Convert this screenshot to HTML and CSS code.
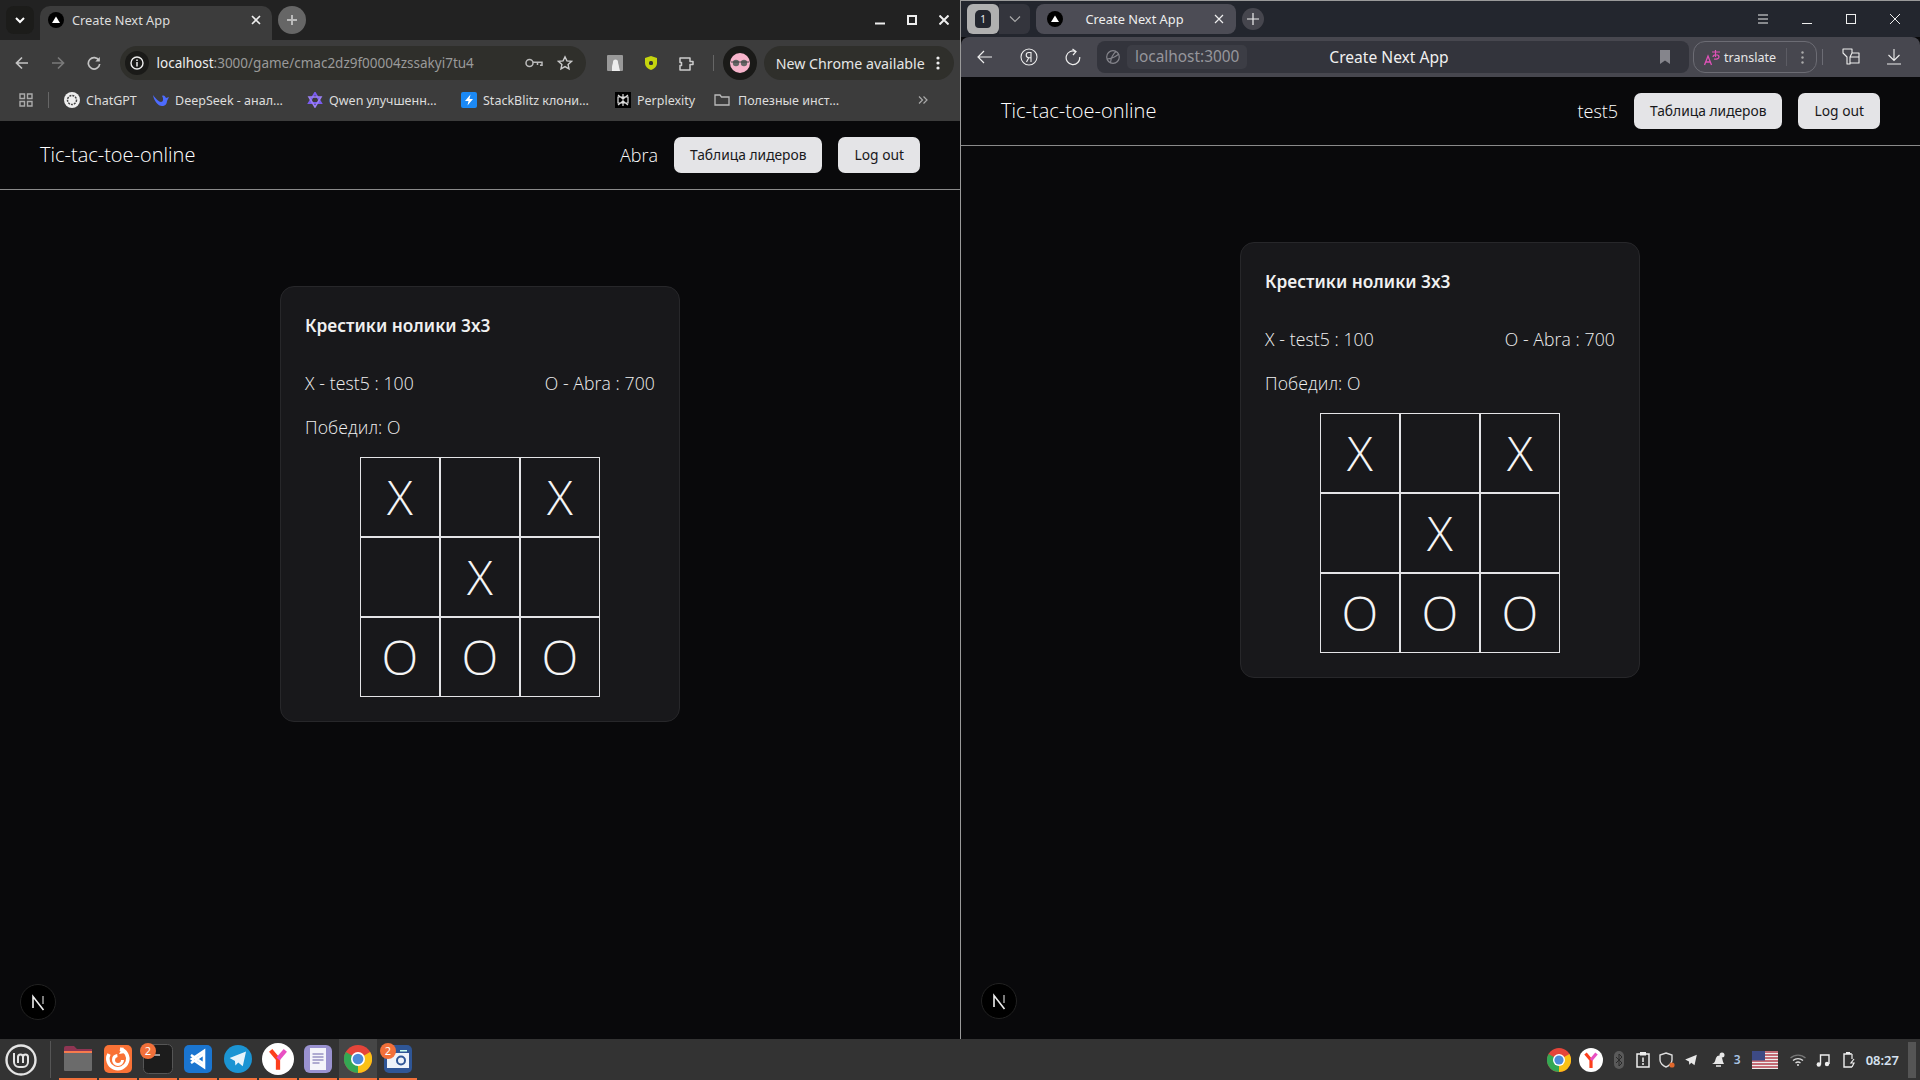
FILE: index.html
```html
<!DOCTYPE html>
<html lang="en">
<head>
    <meta charset="UTF-8">
    <title>Desktop</title>
    <link rel="stylesheet" href="styles.css">
</head>
<body>
<svg class="sprites" width="0" height="0">
    <symbol id="tri" viewBox="0 0 16 16"><circle cx="8" cy="8" r="8" fill="#000"/><path d="M8 4.5l4 6.5H4z" fill="#fff"/></symbol>
    <symbol id="nbadge" viewBox="0 0 36 36"><circle cx="18" cy="18" r="17.5" fill="#000" stroke="#222"/><path d="M13 24V12.5L23.5 26" fill="none" stroke="#eee" stroke-width="1.6"/><path d="M23 12v8" stroke="#999" stroke-width="1.6"/></symbol>
    <symbol id="chrome" viewBox="0 0 24 24"><circle cx="12" cy="12" r="12" fill="#e5453a"/><path d="M12 12L1.6 6A12 12 0 0 0 12 24z" fill="#34a853"/><path d="M12 12v12A12 12 0 0 0 22.4 6z" fill="#fbc116"/><circle cx="12" cy="12" r="6" fill="#fff"/><circle cx="12" cy="12" r="4.6" fill="#4c8bd8"/></symbol>
    <symbol id="yandex" viewBox="0 0 24 24"><circle cx="12" cy="12" r="12" fill="#fff"/><path d="M12 20v-8L6.5 5.5" fill="none" stroke="#fc3f1d" stroke-width="3.2"/><path d="M12 12l5.5-6.5" fill="none" stroke="#e84fc2" stroke-width="3.2"/></symbol>
    <symbol id="tele" viewBox="0 0 24 24"><path d="M2 11L22 3l-4 18-5.5-4.5L9 20l-.5-5.5z" fill="currentColor"/></symbol>
</svg>

<div class="desktop">
    <!-- left window, chrome -->
    <section class="win win-chrome">
        <div class="c-tabs">
            <div class="c-tablist"><svg width="12" height="8" viewBox="0 0 12 8"><path d="M2 2l4 4 4-4" fill="none" stroke="#fff" stroke-width="2"/></svg></div>
            <div class="c-tab">
                <svg class="fav" width="16" height="16"><use href="#tri"/></svg>
                <span class="c-tab-title">Create Next App</span>
                <svg width="10" height="10" viewBox="0 0 10 10"><path d="M1 1l8 8M9 1l-8 8" stroke="#eee" stroke-width="1.6"/></svg>
            </div>
            <div class="c-newtab"><svg width="12" height="12" viewBox="0 0 12 12"><path d="M6 1v10M1 6h10" stroke="#bbb" stroke-width="2"/></svg></div>
            <div class="c-winbtns">
                <svg width="10" height="10" viewBox="0 0 10 10"><path d="M0 8.500h10" stroke="#eee" stroke-width="2"/></svg>
                <svg width="10" height="10" viewBox="0 0 10 10"><rect x="1" y="1" width="8" height="8" fill="none" stroke="#eee" stroke-width="2"/></svg>
                <svg width="10" height="10" viewBox="0 0 10 10"><path d="M.5.5l9 9M9.5.5l-9 9" stroke="#eee" stroke-width="2"/></svg>
            </div>
        </div>
        <div class="c-toolbar">
            <div class="c-nav">
                <svg width="14" height="14" viewBox="0 0 14 14"><path d="M13 7H2M7 1.5L1.500 7 7 12.500" fill="none" stroke="#c4c4c4" stroke-width="1.7"/></svg>
                <svg width="14" height="14" viewBox="0 0 14 14"><path d="M1 7h11M7 1.500L12.500 7 7 12.500" fill="none" stroke="#7a7a7a" stroke-width="1.7"/></svg>
                <svg width="14" height="14" viewBox="0 0 14 14"><path d="M12 4.500A5.700 5.700 0 1 0 12.700 8" fill="none" stroke="#c4c4c4" stroke-width="1.7"/><path d="M12.800 1v4.500H8.300z" fill="#c4c4c4"/></svg>
            </div>
            <div class="c-omni">
                <div class="c-info"><svg width="14" height="14" viewBox="0 0 14 14"><circle cx="7" cy="7" r="6" fill="none" stroke="#eee" stroke-width="1.4"/><path d="M7 6v4.500M7 3.500V5" stroke="#eee" stroke-width="1.5"/></svg></div>
                <div class="c-url">localhost<span class="c-url-rest">:3000/game/cmac2dz9f00004zssakyi7tu4</span></div>
                <svg width="18" height="10" viewBox="0 0 18 10"><circle cx="4.500" cy="5" r="3.500" fill="none" stroke="#bbb" stroke-width="1.5"/><path d="M8 4.200h9v3h-2M12.500 4.500V7" fill="none" stroke="#bbb" stroke-width="1.5"/></svg>
                <svg class="c-star" width="16" height="16" viewBox="0 0 16 16"><path d="M8 1.800l1.900 4.100 4.500.5-3.300 3 .9 4.400L8 11.600l-4 2.200.9-4.400-3.300-3 4.500-.5z" fill="none" stroke="#ccc" stroke-width="1.4"/></svg>
            </div>
            <div class="c-exts">
                <svg width="16" height="16" viewBox="0 0 16 16"><rect width="16" height="16" rx="1" fill="#999"/><path d="M5 16V12c0-2 1-3 1-5a2.500 2.500 0 0 1 5 0c0 2 1 3 1 5l1 4z" fill="#eee"/></svg>
                <svg width="12" height="14" viewBox="0 0 12 14"><path d="M6 0l6 2v5c0 3.500-3 6-6 7-3-1-6-3.500-6-7V2z" fill="#c5d50e"/><rect x="4" y="5" width="4" height="4" rx="1.500" fill="#333"/></svg>
                <svg width="16" height="16" viewBox="0 0 16 16"><path d="M1 3h10v3.500h3v3h-3V15H1v-4.500h1.500v-3H1z" fill="none" stroke="#ccc" stroke-width="1.5" stroke-linejoin="round"/></svg>
            </div>
            <div class="c-divider"></div>
            <div class="c-avatar"><svg width="20" height="20" viewBox="0 0 20 20"><circle cx="10" cy="10" r="10" fill="#f7b4cb"/><circle cx="6" cy="10" r="3.200" fill="#666"/><circle cx="14" cy="10" r="3.200" fill="#666"/><path d="M1 9h18" stroke="#444"/></svg></div>
            <div class="c-update">
                <span>New Chrome available</span>
                <svg width="4" height="14" viewBox="0 0 4 14"><circle cx="2" cy="2" r="1.600" fill="#eee"/><circle cx="2" cy="7" r="1.600" fill="#eee"/><circle cx="2" cy="12" r="1.600" fill="#eee"/></svg>
            </div>
        </div>
        <div class="c-marks">
            <svg class="c-apps" width="14" height="14" viewBox="0 0 14 14"><path d="M1 1h4.500v4.500H1zM8.500 1H13v4.500H8.500zM1 8.500h4.500V13H1zM8.500 8.500H13V13H8.500z" fill="none" stroke="#aaa" stroke-width="1.4"/></svg>
            <div class="c-marks-sep"></div>
            <a class="mark m-gpt"><svg width="16" height="16" viewBox="0 0 16 16"><circle cx="8" cy="8" r="8" fill="#eee"/><circle cx="8" cy="8" r="4.500" fill="none" stroke="#444" stroke-width="1.500" stroke-dasharray="2 1"/></svg>ChatGPT</a>
            <a class="mark m-deep"><svg width="16" height="12" viewBox="0 0 16 12"><path d="M0 1c1 6 5 11 9 11 3 0 5-2 5-5l2-4-3 1c-1-2-2-3-4-2 2 3 1 6-1 6C6 8 3 5 0 1z" fill="#4d6bfe"/></svg>DeepSeek - анал…</a>
            <a class="mark m-qwen"><svg width="16" height="16" viewBox="0 0 16 16"><path d="M8 1l6 10H2z" fill="none" stroke="#7a5bf0" stroke-width="2"/><path d="M8 15L2 5h12z" fill="none" stroke="#9a80f5" stroke-width="1.6"/></svg>Qwen улучшенн…</a>
            <a class="mark m-stack"><svg width="16" height="16" viewBox="0 0 16 16"><rect width="16" height="16" rx="2" fill="#1b89f5"/><path d="M9.500 2.500L4 9h3.500l-1 4.500L12 7H8.500z" fill="#fff"/></svg>StackBlitz клони…</a>
            <a class="mark m-perp"><svg width="16" height="16" viewBox="0 0 16 16"><rect width="16" height="16" fill="#000"/><path d="M8 2v12M3 3l5 4 5-4M3 13l5-4 5 4M3 5v6h10V5z" fill="none" stroke="#ddd" stroke-width="1.2"/></svg>Perplexity</a>
            <a class="mark m-folder"><svg width="16" height="12" viewBox="0 0 16 12"><path d="M1 1h5l1.500 2H15v8H1z" fill="none" stroke="#bbb" stroke-width="1.3"/></svg>Полезные инст…</a>
            <svg class="c-more" width="10" height="8" viewBox="0 0 10 8"><path d="M1 .5L4.500 4 1 7.500M5.500.5L9 4 5.500 7.500" fill="none" stroke="#aaa" stroke-width="1.2"/></svg>
        </div>
        <main class="page">
            <header class="site-head">
                <span class="logo">Tic-tac-toe-online</span>
                <span class="user">Abra</span>
                <button class="btn">Таблица лидеров</button>
                <button class="btn">Log out</button>
            </header>
            <div class="card card-left">
                <h2 class="card-title">Крестики нолики 3х3</h2>
                <div class="players"><span>X - test5 : 100</span><span>O - Abra : 700</span></div>
                <div class="winner">Победил: O</div>
                <div class="board">
                    <div class="cell">X</div><div class="cell"></div><div class="cell">X</div>
                    <div class="cell"></div><div class="cell">X</div><div class="cell"></div>
                    <div class="cell">O</div><div class="cell">O</div><div class="cell">O</div>
                </div>
            </div>
            <svg class="next-badge" width="36" height="36"><use href="#nbadge"/></svg>
        </main>
    </section>

    <!-- right window, yandex -->
    <section class="win win-yandex">
        <div class="y-tabs">
            <div class="y-count"><span class="y-count-num">1</span></div>
            <div class="y-chev"><svg width="12" height="8" viewBox="0 0 12 8"><path d="M1 1.500l5 5 5-5" fill="none" stroke="#aaa" stroke-width="1.2"/></svg></div>
            <div class="y-tab">
                <svg class="fav" width="16" height="16"><use href="#tri"/></svg>
                <span class="y-tab-title">Create Next App</span>
                <svg width="10" height="10" viewBox="0 0 10 10"><path d="M1 1l8 8M9 1l-8 8" stroke="#eee" stroke-width="1.2"/></svg>
            </div>
            <div class="y-newtab"><svg width="12" height="12" viewBox="0 0 12 12"><path d="M6 0v12M0 6h12" stroke="#eee" stroke-width="1.2"/></svg></div>
            <div class="y-winbtns">
                <svg width="10" height="10" viewBox="0 0 10 10"><path d="M0 1h10M0 5h10M0 9h10" stroke="#eee"/></svg>
                <svg width="10" height="10" viewBox="0 0 10 10"><path d="M0 9.500h10" stroke="#eee"/></svg>
                <svg width="10" height="10" viewBox="0 0 10 10"><rect x=".5" y=".5" width="9" height="9" fill="none" stroke="#eee"/></svg>
                <svg width="10" height="10" viewBox="0 0 10 10"><path d="M0 0l10 10M10 0L0 10" stroke="#eee"/></svg>
            </div>
        </div>
        <div class="y-toolbar">
            <div class="y-nav">
                <svg width="16" height="14" viewBox="0 0 16 14"><path d="M15 7H1M7 1L1 7l6 6" fill="none" stroke="#eee" stroke-width="1.2"/></svg>
                <svg width="18" height="18" viewBox="0 0 18 18"><circle cx="9" cy="9" r="8" fill="none" stroke="#eee" stroke-width="1.1"/><path d="M11 14V4.500H8.800a2.600 2.600 0 0 0 0 5.200H11M8.800 9.700L6.500 14" fill="none" stroke="#eee" stroke-width="1.1"/></svg>
                <svg width="16" height="18" viewBox="0 0 16 18"><path d="M11 3.700A6.800 6.800 0 1 0 14.700 9" fill="none" stroke="#eee" stroke-width="1.2"/><path d="M7.500 1L11 3.700 8 7" fill="none" stroke="#eee" stroke-width="1.2"/></svg>
            </div>
            <div class="y-omni">
                <svg class="y-globe" width="14" height="14" viewBox="0 0 14 14"><circle cx="7" cy="7" r="6.300" fill="none" stroke="#85858c" stroke-width="1.2"/><path d="M1 9c4 0 8-2 12-5M4.500 12.500C5 8 7 4 10 1.500" fill="none" stroke="#85858c" stroke-width="1.1"/></svg>
                <span class="y-host">localhost:3000</span>
                <span class="y-title">Create Next App</span>
                <svg class="y-mark" width="10" height="14" viewBox="0 0 10 14"><path d="M0 0h10v14L5 10.500 0 14z" fill="#85858c"/></svg>
            </div>
            <div class="y-translate">
                <svg width="17" height="17" viewBox="0 0 17 17"><path d="M.5 16L4 7l3.500 9M2 13h4" fill="none" stroke="#e052b8" stroke-width="1.3"/><path d="M8 3h8M11.500 1v7M9 8c0-3 6-3 6 0 0 2-3 2.500-5 2" fill="none" stroke="#e052b8" stroke-width="1.2"/></svg>
                <span>translate</span>
                <div class="y-tr-sep"></div>
                <svg width="3" height="13" viewBox="0 0 3 13"><circle cx="1.500" cy="1.500" r="1.200" fill="#aaa"/><circle cx="1.500" cy="6.500" r="1.200" fill="#aaa"/><circle cx="1.500" cy="11.500" r="1.200" fill="#aaa"/></svg>
            </div>
            <div class="y-divider"></div>
            <svg class="y-panel" width="18" height="18" viewBox="0 0 18 18"><path d="M1 1h9v4L8 9v7H5V9L1 5zM10 5h7v10H8M8 9h9" fill="none" stroke="#eee" stroke-width="1.1" stroke-linejoin="round"/></svg>
            <svg class="y-down" width="14" height="16" viewBox="0 0 14 16"><path d="M7 0v11M1.500 6L7 11.500 12.500 6M0 15h14" fill="none" stroke="#eee" stroke-width="1.1"/></svg>
        </div>
        <main class="page">
            <header class="site-head">
                <span class="logo">Tic-tac-toe-online</span>
                <span class="user">test5</span>
                <button class="btn">Таблица лидеров</button>
                <button class="btn">Log out</button>
            </header>
            <div class="card card-right">
                <h2 class="card-title">Крестики нолики 3х3</h2>
                <div class="players"><span>X - test5 : 100</span><span>O - Abra : 700</span></div>
                <div class="winner">Победил: O</div>
                <div class="board">
                    <div class="cell">X</div><div class="cell"></div><div class="cell">X</div>
                    <div class="cell"></div><div class="cell">X</div><div class="cell"></div>
                    <div class="cell">O</div><div class="cell">O</div><div class="cell">O</div>
                </div>
            </div>
            <svg class="next-badge" width="36" height="36"><use href="#nbadge"/></svg>
        </main>
    </section>
</div>

<footer class="taskbar">
    <svg class="mint" width="32" height="32" viewBox="0 0 32 32"><circle cx="16" cy="16" r="14.500" fill="none" stroke="#e4e4e4" stroke-width="2.4"/><path d="M9 9v9a5 5 0 0 0 5 5h4a5 5 0 0 0 5-5v-5a2.500 2.500 0 0 0-5 0v6M18 13a2.500 2.500 0 0 0-5 0v6" fill="none" stroke="#e4e4e4" stroke-width="2"/></svg>
    <div class="task-sep"></div>
    <div class="apps">
        <div class="app on"><svg width="28" height="26" viewBox="0 0 28 26"><path d="M0 2a2 2 0 0 1 2-2h8l3 3h15v5H0z" fill="#8f3553"/><rect y="5" width="28" height="2" fill="#f77b4d"/><rect y="7" width="28" height="18" rx="1" fill="#6b6b6b"/></svg></div>
        <div class="app on"><svg width="28" height="28" viewBox="0 0 28 28"><rect width="28" height="28" rx="5" fill="#f97236"/><path d="M16 4a10 10 0 1 1-11 5" fill="none" stroke="#fff" stroke-width="3.5"/><path d="M19 2l2 6-6 1z" fill="#fff"/><circle cx="14" cy="15" r="4.500" fill="none" stroke="#fff" stroke-width="3" stroke-dasharray="20 8"/></svg></div>
        <div class="app on"><svg width="30" height="30" viewBox="0 0 30 30"><rect x=".5" y=".5" width="29" height="29" rx="5" fill="#1c1c1c" stroke="#555"/><path d="M11 11h6" stroke="#eee" stroke-width="1.2"/><path d="M6 8h1" stroke="#bbb"/></svg><span class="task-badge">2</span></div>
        <div class="app on"><svg width="28" height="28" viewBox="0 0 28 28"><rect width="28" height="28" rx="5" fill="#1a75d0"/><path d="M20 6v16l-12-8zM7 10l13 9M7 18l13-9" fill="none" stroke="#fff" stroke-width="2.6"/></svg></div>
        <div class="app on"><svg width="28" height="28" viewBox="0 0 28 28"><circle cx="14" cy="14" r="14" fill="#1b94d3"/><g transform="translate(4 4) scale(.82)" color="#e8f4fb"><use href="#tele" width="24" height="24"/></g></svg></div>
        <div class="app on"><svg width="32" height="32"><use href="#yandex"/></svg></div>
        <div class="app on"><svg width="28" height="28" viewBox="0 0 28 28"><rect width="28" height="28" rx="6" fill="#9a92d0"/><rect x="6" y="3" width="16" height="22" fill="#f4f4fa"/><path d="M8.500 9h11M8.500 12h11M8.500 15h11M8.500 18h7" stroke="#6a62a8"/></svg></div>
        <div class="app on active"><svg width="28" height="28"><use href="#chrome"/></svg></div>
        <div class="app on"><svg width="28" height="28" viewBox="0 0 28 28"><rect width="28" height="28" rx="5" fill="#2f5696"/><rect x="3" y="8" width="22" height="15" fill="#eef3f9"/><circle cx="17" cy="15.500" r="4" fill="#eef3f9" stroke="#2f5696" stroke-width="2"/><rect x="16" y="5" width="7" height="1.500" fill="#cfe"/></svg><span class="task-badge">2</span></div>
    </div>
    <div class="tray">
        <svg class="t-chrome" width="24" height="24"><use href="#chrome"/></svg>
        <svg class="t-yandex" width="24" height="24"><use href="#yandex"/></svg>
        <svg class="t-bt" width="10" height="18" viewBox="0 0 10 18"><rect width="10" height="18" rx="5" fill="#5a5a5a"/><path d="M2 6l6 6-3 3V3l3 3-6 6" fill="none" stroke="#2a2a2a"/></svg>
        <svg class="t-clip" width="14" height="16" viewBox="0 0 14 16"><path d="M4 2H1v13h12V2h-3" fill="none" stroke="#eee" stroke-width="1.5"/><rect x="4" y="0" width="6" height="3.500" fill="#eee"/><path d="M7 5.500V10M7 11v2" stroke="#eee" stroke-width="1.5"/></svg>
        <svg class="t-shield" width="16" height="16" viewBox="0 0 16 16"><path d="M7 1l6 2v5c0 3-3 6-6 7-3-1-6-4-6-7V3z" fill="none" stroke="#ddd" stroke-width="1.4"/><circle cx="13" cy="13" r="2.600" fill="#e0672b"/></svg>
        <svg class="t-tele" width="16" height="14" viewBox="0 0 24 24" color="#e8e8e8"><use href="#tele"/></svg>
        <svg class="t-bell" width="16" height="16" viewBox="0 0 16 16"><path d="M1 12c3-1 3-3 4-6s4-3 5-2c2 2 1 5 3 8z" fill="#e8e8e8"/><circle cx="11" cy="3" r="2.500" fill="#e8e8e8"/><path d="M5 14h5" stroke="#e8e8e8" stroke-width="1.5"/></svg>
        <span class="t-num">3</span>
        <svg class="t-flag" width="26" height="18" viewBox="0 0 26 18"><rect width="26" height="18" fill="#eee"/><path d="M0 1h26M0 4h26M0 7h26M0 10h26M0 13h26M0 16h26" stroke="#b5414f" stroke-width="1.5"/><rect width="13" height="9.500" fill="#3d4a84"/></svg>
        <svg class="t-wifi" width="16" height="12" viewBox="0 0 16 12"><path d="M.5 4a11 11 0 0 1 15 0" fill="none" stroke="#777" stroke-width="1.3"/><path d="M3 6.500a7.500 7.500 0 0 1 10 0M5.500 9a4 4 0 0 1 5 0" fill="none" stroke="#ddd" stroke-width="1.3"/><circle cx="8" cy="11" r="1" fill="#ddd"/></svg>
        <svg class="t-music" width="14" height="14" viewBox="0 0 14 14"><path d="M4.500 11.500V2H13v9" fill="none" stroke="#eee" stroke-width="1.4"/><circle cx="2.800" cy="11.500" r="2.200" fill="#eee"/><circle cx="11" cy="11" r="2.200" fill="#eee"/></svg>
        <svg class="t-batt" width="14" height="16" viewBox="0 0 14 16"><path d="M3 2h5V1M3 2H1v13h8" fill="none" stroke="#eee" stroke-width="1.4"/><rect x="3" y="0" width="4" height="2" fill="#eee"/><path d="M9 2v5M11 7l-3 4h3l-2 4" fill="none" stroke="#eee" stroke-width="1.2"/></svg>
        <span class="t-time">08:27</span>
        <div class="t-show"></div>
    </div>
</footer>
</body>
</html>
```

FILE: styles.css
```css
* {
    box-sizing: border-box;
}
html, body {
    margin: 0;
    height: 100%;
    overflow: hidden;
}
body {
    display: flex;
    flex-direction: column;
    font-family: "Noto Sans", sans-serif;
    background: #09090b;
}
.sprites {
    position: absolute;
}
svg {
    flex: none;
    display: block;
}
.desktop {
    display: flex;
    height: 1039px;
}
.win {
    width: 960px;
    display: flex;
    flex-direction: column;
}

/* left browser */
.c-tabs {
    height: 40px;
    background: #222;
    display: flex;
    align-items: flex-end;
    padding-left: 6px;
}
.c-tablist {
    width: 28px;
    height: 28px;
    margin-bottom: 6px;
    background: #1c1c1a;
    border-radius: 8px;
    display: flex;
    align-items: center;
    justify-content: center;
}
.c-tab {
    width: 232px;
    height: 34px;
    margin-left: 6px;
    padding: 0 11px 6px 8px;
    background: #3c3c3c;
    border-radius: 10px 10px 0 0;
    display: flex;
    align-items: center;
}
.c-tab-title {
    flex: 1;
    margin-left: 8px;
    font-size: 12.8px;
    color: #ddd;
}
.c-newtab {
    width: 28px;
    height: 28px;
    margin: 0 0 6px 6px;
    background: #666;
    border-radius: 50%;
    display: flex;
    align-items: center;
    justify-content: center;
}
.c-winbtns {
    margin-left: auto;
    height: 40px;
    padding-right: 11px;
    display: flex;
    align-items: center;
    gap: 22px;
}
.c-toolbar {
    height: 44px;
    background: #3c3c3c;
    display: flex;
    align-items: center;
    padding: 2px 6px 0 0;
}
.c-nav {
    width: 120px;
    padding-left: 15px;
    display: flex;
    gap: 22px;
}
.c-omni {
    width: 469px;
    height: 34px;
    border-radius: 17px;
    background: #2f2f2b;
    display: flex;
    align-items: center;
    padding-left: 5px;
}
.c-info {
    width: 24px;
    height: 24px;
    border-radius: 50%;
    background: #1a1a18;
    display: flex;
    align-items: center;
    justify-content: center;
}
.c-url {
    flex: 1;
    margin-left: 8px;
    font-size: 13.5px;
    color: #eee;
}
.c-url-rest {
    color: #9a9a9a;
}
.c-star {
    margin: 0 13px 0 14px;
}
.c-exts {
    width: 127px;
    padding-left: 21px;
    display: flex;
    align-items: center;
    gap: 22px;
}
.c-divider {
    width: 1px;
    height: 16px;
    background: #666;
}
.c-avatar {
    width: 34px;
    height: 34px;
    margin-left: 9px;
    border-radius: 50%;
    background: #1a1a18;
    display: flex;
    align-items: center;
    justify-content: center;
}
.c-update {
    width: 191px;
    height: 34px;
    margin-left: 7px;
    border-radius: 17px;
    background: #2f2f2b;
    padding: 0 14px 0 12px;
    display: flex;
    align-items: center;
    justify-content: space-between;
    font-size: 14.2px;
    color: #e6e6e6;
    white-space: nowrap;
}
.c-marks {
    height: 37px;
    background: #3c3c3c;
    display: flex;
    align-items: center;
    font-size: 12.5px;
    color: #ddd;
    padding: 0 0 5px 19px;
}
.c-marks-sep {
    width: 1px;
    height: 16px;
    margin: 0 15px;
    background: #666;
}
.mark {
    display: flex;
    align-items: center;
    gap: 6px;
    white-space: nowrap;
}
.m-gpt { width: 89px; }
.m-deep { width: 154px; }
.m-qwen { width: 154px; }
.m-stack { width: 154px; }
.m-perp { width: 99px; }
.m-folder { gap: 8px; }
.c-more {
    position: absolute;
    left: 918px;
}

/* page inside both browsers */
.page {
    position: relative;
    flex: 1;
    background: #09090b;
}
.site-head {
    height: 69px;
    border-bottom: 1px solid #8a8a8a;
    padding: 0 40px;
    display: flex;
    align-items: center;
    font-family: "Open Sans", sans-serif;
    color: #fafafa;
}
.logo {
    font-size: 20px;
    font-weight: 300;
    margin-right: auto;
    padding-bottom: 1px;
    color: #fff;
}
.user {
    font-size: 18px;
    font-weight: 300;
    margin-right: 16px;
    color: #fff;
}
.btn {
    height: 36px;
    padding: 0 16px 2px;
    border: 0;
    border-radius: 7px;
    background: #e4e4e7;
    color: #18181b;
    font-family: "Noto Sans", sans-serif;
    font-size: 13.8px;
    white-space: nowrap;
}
.btn + .btn {
    margin-left: 16px;
}
.card {
    width: 400px;
    height: 436px;
    margin: 96px 0 0 280px;
    padding: 24px;
    background: #18181b;
    border: 1px solid #27272a;
    border-radius: 14px;
    color: #f0f0f0;
    font-family: "Open Sans", sans-serif;
    font-size: 17.6px;
    font-weight: 300;
    letter-spacing: .1px;
}
.card-title {
    margin: 0 0 31px;
    padding-top: 1px;
    font-family: "Noto Sans", sans-serif;
    font-size: 17.3px;
    font-weight: 600;
    line-height: 28px;
    letter-spacing: 0;
    color: #f0f0f0;
}
.players {
    display: flex;
    justify-content: space-between;
    line-height: 24px;
    margin-bottom: 20px;
}
.winner {
    line-height: 24px;
    margin-bottom: 18px;
}
.board {
    width: 240px;
    margin: 0 auto;
    display: grid;
    grid-template-columns: repeat(3, 80px);
    grid-auto-rows: 80px;
}
.cell {
    border: 1px solid #e4e4e7;
    display: flex;
    align-items: center;
    justify-content: center;
    padding-bottom: 2px;
    font-size: 48px;
    font-weight: 350;
    color: #f4f4f5;
}
.next-badge {
    position: absolute;
    left: 20px;
    bottom: 19px;
}

/* right browser */
.win-yandex {
    border-left: 1px solid #9a9a9a;
    border-top: 1px solid #9a9a9a;
}
.win-yandex .next-badge {
    bottom: 20px;
}
.y-tabs {
    height: 36px;
    background: #23262e;
    display: flex;
    align-items: flex-start;
    padding: 3px 0 0 6px;
}
.y-count {
    width: 32px;
    height: 30px;
    border-radius: 6px;
    background: #b0b0b0;
    display: flex;
    align-items: center;
    justify-content: center;
}
.y-count-num {
    width: 16px;
    height: 18px;
    border-radius: 5px 5px 4px 4px;
    background: #23262e;
    color: #eee;
    font-size: 10px;
    text-align: center;
    line-height: 18px;
}
.y-chev {
    width: 31px;
    height: 30px;
    border-radius: 0 6px 6px 0;
    background: #34353d;
    display: flex;
    align-items: center;
    justify-content: center;
}
.y-tab {
    width: 200px;
    height: 30px;
    margin-left: 6px;
    padding: 0 12px 0 11px;
    background: #4c4c55;
    border-radius: 8px;
    display: flex;
    align-items: center;
}
.y-tab-title {
    flex: 1;
    padding-right: 8px;
    text-align: center;
    font-size: 12.8px;
    color: #eee;
}
.y-newtab {
    width: 22px;
    height: 22px;
    margin: 4px 0 0 6px;
    background: #46464e;
    border-radius: 50%;
    display: flex;
    align-items: center;
    justify-content: center;
}
.y-winbtns {
    margin-left: auto;
    height: 30px;
    padding-right: 20px;
    display: flex;
    align-items: center;
    gap: 34px;
}
.y-toolbar {
    height: 40px;
    background: #47474f;
    border-radius: 8px 8px 0 0;
    display: flex;
    align-items: center;
}
.y-nav {
    width: 136px;
    padding-left: 16px;
    display: flex;
    align-items: center;
    gap: 27px;
}
.y-omni {
    position: relative;
    width: 592px;
    height: 32px;
    background: #33343c;
    border-radius: 8px;
    display: flex;
    align-items: center;
    padding-left: 9px;
}
.y-host {
    margin-left: 7px;
    padding: 0 8px;
    line-height: 24px;
    font-size: 15.4px;
    color: #96969c;
    background: #3c3d45;
    border-radius: 5px;
}
.y-title {
    position: absolute;
    left: 0;
    right: 8px;
    text-align: center;
    font-size: 15.6px;
    color: #f0f0f0;
}
.y-mark {
    margin-left: auto;
    margin-right: 19px;
}
.y-translate {
    width: 124px;
    height: 32px;
    margin-left: 4px;
    border: 1px solid #6c6c74;
    border-radius: 12px;
    display: flex;
    align-items: center;
    padding-left: 10px;
    font-size: 12.5px;
    color: #e6e6e6;
}
.y-translate span {
    margin-left: 3px;
}
.y-tr-sep {
    width: 1px;
    height: 18px;
    margin: 0 14px 0 10px;
    background: #5c5c64;
}
.y-divider {
    width: 1px;
    height: 16px;
    margin-left: 5px;
    background: #6c6c74;
}
.y-panel {
    margin-left: 19px;
}
.y-down {
    margin-left: 27px;
}
.card-right {
    margin-left: 279px;
}

/* taskbar */
.taskbar {
    height: 41px;
    background: #333;
    display: flex;
    align-items: center;
    color: #eee;
}
.mint {
    margin-left: 5px;
}
.task-sep {
    width: 1px;
    height: 37px;
    margin: 0 8px 0 13px;
    background: #555;
}
.apps {
    display: flex;
    gap: 2px;
}
.app {
    position: relative;
    width: 38px;
    height: 41px;
    display: flex;
    align-items: center;
    justify-content: center;
}
.app.on {
    border-bottom: 2px solid #f2703a;
}
.app.active {
    background: #464646;
}
.task-badge {
    position: absolute;
    top: 4px;
    left: 1px;
    width: 16px;
    height: 16px;
    border-radius: 50%;
    background: #f2703a;
    color: #fff;
    font-size: 11px;
    text-align: center;
    line-height: 16px;
}
.tray {
    margin-left: auto;
    height: 41px;
    display: flex;
    align-items: center;
}
.t-yandex { margin-left: 8px; }
.t-bt { margin-left: 11px; }
.t-clip { margin-left: 12px; }
.t-shield { margin-left: 9px; }
.t-tele { margin-left: 8px; }
.t-bell { margin-left: 12px; }
.t-num {
    margin-left: 7px;
    font-size: 12px;
    font-weight: 600;
    color: #a9c4e4;
}
.t-flag { margin-left: 11px; }
.t-wifi { margin-left: 12px; }
.t-music { margin-left: 10px; }
.t-batt { margin-left: 13px; }
.t-time {
    margin-left: 9px;
    font-size: 13px;
    font-weight: 600;
    color: #d6e2f0;
}
.t-show {
    width: 8px;
    height: 36px;
    margin: 0 4px 0 9px;
    background: #555;
}
```
